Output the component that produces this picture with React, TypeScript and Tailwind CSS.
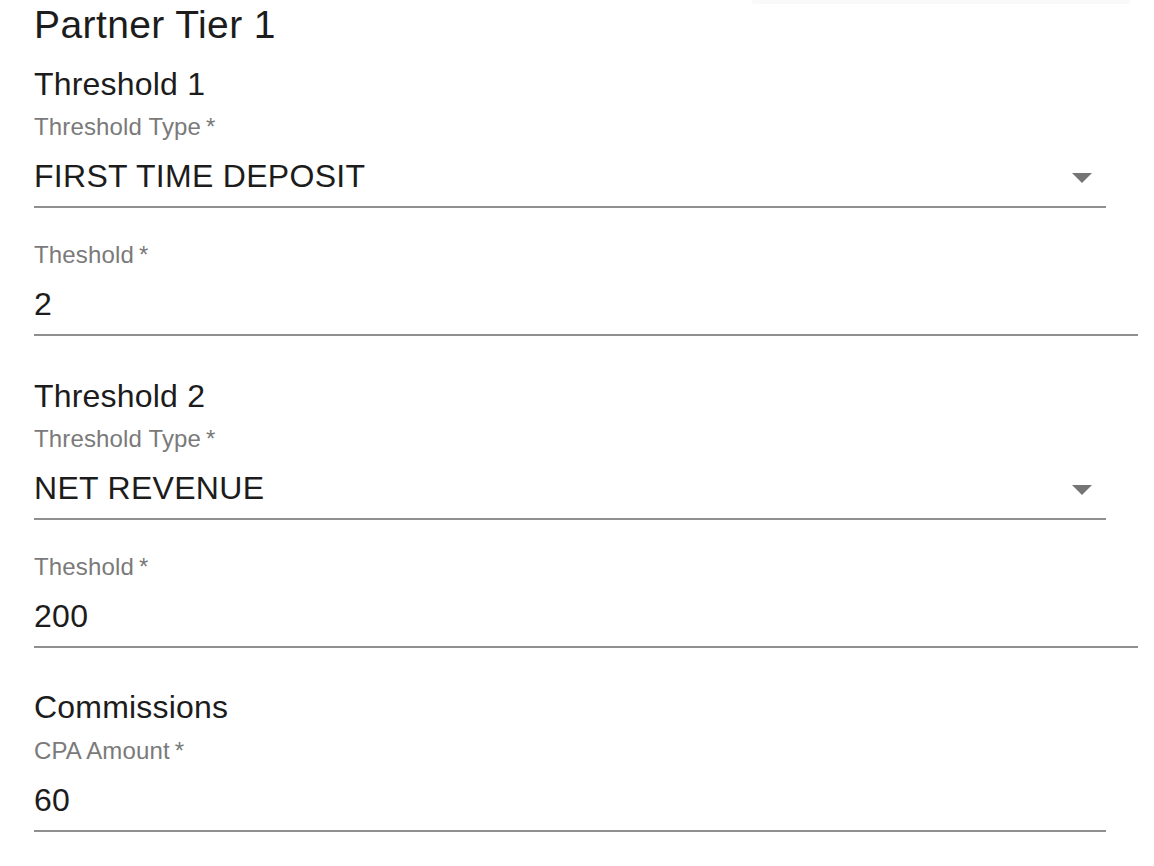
import React from "react";

const font = { fontFamily: '"Liberation Sans", Arial, Helvetica, sans-serif' };

function Arrow() {
  return (
    <svg width="20" height="10" viewBox="0 0 20 10" className="self-start mt-[13px] mr-[14px] shrink-0">
      <path d="M0 0 L10 10 L20 0 Z" fill="#757575" />
    </svg>
  );
}

function Field({
  label,
  value,
  select,
  narrow,
  className = "",
}: {
  label: string;
  value: string;
  select?: boolean;
  narrow?: boolean;
  className?: string;
}) {
  return (
    <div className={(narrow ? "w-[1072px] " : "w-[1104px] ") + className}>
      <div className="text-[24px] leading-[24px] h-[24px] tracking-[0.15px] text-[#7a7a7a] whitespace-nowrap">
        {label}
        <span>{"\u2009*"}</span>
      </div>
      <div className="mt-[21px] flex justify-between h-[32px]">
        <div className="text-[32px] leading-[32px] tracking-[0.3px] text-[#1c1c1c] whitespace-nowrap">{value}</div>
        {select && <Arrow />}
      </div>
      <div className="mt-[14px] h-[2px] bg-[#8f8f8f]" />
    </div>
  );
}

function Heading({ children, className = "" }: { children: React.ReactNode; className?: string }) {
  return (
    <div className={"text-[32px] leading-[32px] h-[32px] tracking-[0.2px] text-[#1c1c1c] whitespace-nowrap " + className}>
      {children}
    </div>
  );
}

export default function App() {
  return (
    <div className="w-[1154px] h-[866px] bg-white overflow-hidden" style={font}>
      <div className="flex h-[4px]">
        <div className="ml-[752px] w-[378px] h-[4px] bg-[#f9f9f9] rounded-b-[3px]" />
      </div>
      <div className="pl-[34px] flex flex-col">
        <div className="mt-[1px] text-[39px] leading-[39px] h-[39px] tracking-[0.4px] text-[#1c1c1c] whitespace-nowrap">
          Partner Tier 1
        </div>
        <Heading className="mt-[24px]">Threshold 1</Heading>
        <Field className="mt-[15px]" label="Threshold Type" value="FIRST TIME DEPOSIT" select narrow />
        <Field className="mt-[35px]" label="Theshold" value="2" />
        <Heading className="mt-[44px]">Threshold 2</Heading>
        <Field className="mt-[15px]" label="Threshold Type" value="NET REVENUE" select narrow />
        <Field className="mt-[35px]" label="Theshold" value="200" />
        <Heading className="mt-[43px]">Commissions</Heading>
        <Field className="mt-[16px]" label="CPA Amount" value="60" narrow />
      </div>
    </div>
  );
}
